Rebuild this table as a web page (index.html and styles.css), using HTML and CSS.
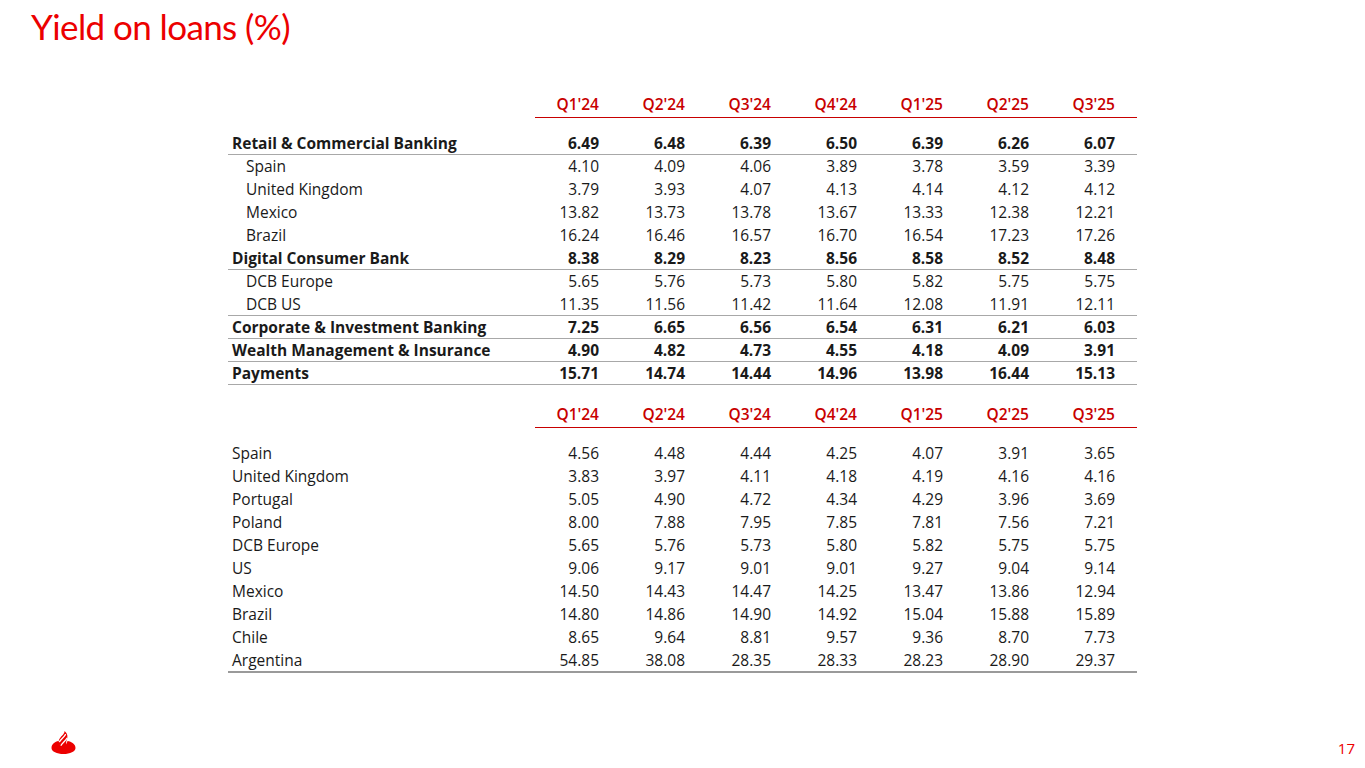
FILE: index.html
```html
<!DOCTYPE html>
<html lang="en">
<head>
<meta charset="utf-8">
<title>Yield on loans (%)</title>
<link rel="stylesheet" href="styles.css">
</head>
<body>
<div class="slide">
  <h1 class="title">Yield on loans (%)</h1>

  <div class="tables">
    <table class="data">
      <colgroup><col class="c-label"><col class="c-num"><col class="c-num"><col class="c-num"><col class="c-num"><col class="c-num"><col class="c-num"><col class="c-num"></colgroup>
      <thead>
        <tr class="head"><th class="blank"></th><th>Q1'24</th><th>Q2'24</th><th>Q3'24</th><th>Q4'24</th><th>Q1'25</th><th>Q2'25</th><th>Q3'25</th></tr>
      </thead>
      <tbody>
        <tr class="spacer"><td colspan="8"></td></tr>
        <tr class="bold line"><td>Retail &amp; Commercial Banking</td><td>6.49</td><td>6.48</td><td>6.39</td><td>6.50</td><td>6.39</td><td>6.26</td><td>6.07</td></tr>
        <tr class="sub"><td>Spain</td><td>4.10</td><td>4.09</td><td>4.06</td><td>3.89</td><td>3.78</td><td>3.59</td><td>3.39</td></tr>
        <tr class="sub"><td>United Kingdom</td><td>3.79</td><td>3.93</td><td>4.07</td><td>4.13</td><td>4.14</td><td>4.12</td><td>4.12</td></tr>
        <tr class="sub"><td>Mexico</td><td>13.82</td><td>13.73</td><td>13.78</td><td>13.67</td><td>13.33</td><td>12.38</td><td>12.21</td></tr>
        <tr class="sub"><td>Brazil</td><td>16.24</td><td>16.46</td><td>16.57</td><td>16.70</td><td>16.54</td><td>17.23</td><td>17.26</td></tr>
        <tr class="bold line"><td>Digital Consumer Bank</td><td>8.38</td><td>8.29</td><td>8.23</td><td>8.56</td><td>8.58</td><td>8.52</td><td>8.48</td></tr>
        <tr class="sub"><td>DCB Europe</td><td>5.65</td><td>5.76</td><td>5.73</td><td>5.80</td><td>5.82</td><td>5.75</td><td>5.75</td></tr>
        <tr class="sub line"><td>DCB US</td><td>11.35</td><td>11.56</td><td>11.42</td><td>11.64</td><td>12.08</td><td>11.91</td><td>12.11</td></tr>
        <tr class="bold line"><td>Corporate &amp; Investment Banking</td><td>7.25</td><td>6.65</td><td>6.56</td><td>6.54</td><td>6.31</td><td>6.21</td><td>6.03</td></tr>
        <tr class="bold line"><td>Wealth Management &amp; Insurance</td><td>4.90</td><td>4.82</td><td>4.73</td><td>4.55</td><td>4.18</td><td>4.09</td><td>3.91</td></tr>
        <tr class="bold line"><td>Payments</td><td>15.71</td><td>14.74</td><td>14.44</td><td>14.96</td><td>13.98</td><td>16.44</td><td>15.13</td></tr>
      </tbody>
    </table>

    <table class="data second">
      <colgroup><col class="c-label"><col class="c-num"><col class="c-num"><col class="c-num"><col class="c-num"><col class="c-num"><col class="c-num"><col class="c-num"></colgroup>
      <thead>
        <tr class="head"><th class="blank"></th><th>Q1'24</th><th>Q2'24</th><th>Q3'24</th><th>Q4'24</th><th>Q1'25</th><th>Q2'25</th><th>Q3'25</th></tr>
      </thead>
      <tbody>
        <tr class="spacer"><td colspan="8"></td></tr>
        <tr><td>Spain</td><td>4.56</td><td>4.48</td><td>4.44</td><td>4.25</td><td>4.07</td><td>3.91</td><td>3.65</td></tr>
        <tr><td>United Kingdom</td><td>3.83</td><td>3.97</td><td>4.11</td><td>4.18</td><td>4.19</td><td>4.16</td><td>4.16</td></tr>
        <tr><td>Portugal</td><td>5.05</td><td>4.90</td><td>4.72</td><td>4.34</td><td>4.29</td><td>3.96</td><td>3.69</td></tr>
        <tr><td>Poland</td><td>8.00</td><td>7.88</td><td>7.95</td><td>7.85</td><td>7.81</td><td>7.56</td><td>7.21</td></tr>
        <tr><td>DCB Europe</td><td>5.65</td><td>5.76</td><td>5.73</td><td>5.80</td><td>5.82</td><td>5.75</td><td>5.75</td></tr>
        <tr><td>US</td><td>9.06</td><td>9.17</td><td>9.01</td><td>9.01</td><td>9.27</td><td>9.04</td><td>9.14</td></tr>
        <tr><td>Mexico</td><td>14.50</td><td>14.43</td><td>14.47</td><td>14.25</td><td>13.47</td><td>13.86</td><td>12.94</td></tr>
        <tr><td>Brazil</td><td>14.80</td><td>14.86</td><td>14.90</td><td>14.92</td><td>15.04</td><td>15.88</td><td>15.89</td></tr>
        <tr><td>Chile</td><td>8.65</td><td>9.64</td><td>8.81</td><td>9.57</td><td>9.36</td><td>8.70</td><td>7.73</td></tr>
        <tr class="last"><td>Argentina</td><td>54.85</td><td>38.08</td><td>28.35</td><td>28.33</td><td>28.23</td><td>28.90</td><td>29.37</td></tr>
      </tbody>
    </table>
  </div>

  <div class="footer">
    <svg class="logo" width="25" height="24" viewBox="0 0 25 24" aria-label="Santander">
      <path d="M0.5 17 C0.5 13 4 10.5 7.5 10 L8.5 13 C9.5 15.8 14.5 15.8 15.5 13 L16.5 10 C20.5 10.5 24.5 13 24.5 17 C24.5 20.6 19 23 12.5 23 C6 23 0.5 20.6 0.5 17 Z" fill="#EC0000"/>
      <path d="M8.3 14 C6.6 10.5 8.3 7.5 11.2 4.6 C12.6 3.2 13.6 1.6 13.6 0 C16.6 2.6 17.2 6 15.7 9 C14.7 11 15.2 12.6 16.2 14 C14.2 16.2 10.3 16.2 8.3 14 Z" fill="#EC0000"/>
      <path d="M8.6 10.6 C9.9 8.2 12.8 6.6 14.4 3.6" stroke="#fff" stroke-width="1.3" fill="none" stroke-linecap="round"/>
      <path d="M10.1 14.2 C11.4 11.6 14.4 10.2 15.9 7.2" stroke="#fff" stroke-width="1.3" fill="none" stroke-linecap="round"/>
    </svg>
    <span class="page">17</span>
  </div>
</div>
</body>
</html>
```

FILE: styles.css
```css
html, body {
  margin: 0;
  padding: 0;
  background: #ffffff;
}

.slide {
  width: 1365px;
  height: 768px;
  display: flex;
  flex-direction: column;
  font-family: "Open Sans", "Noto Sans", sans-serif;
  color: #1a1a1a;
  overflow: hidden;
}

.title {
  margin: 0;
  padding: 3px 0 0 31px;
  height: 46px;
  font-family: "Lato", "Open Sans", sans-serif;
  font-weight: 400;
  font-size: 35px;
  line-height: 46px;
  color: #EC0000;
  letter-spacing: -0.6px;
}

.tables {
  margin: 46px 0 0 228px;
  width: 909px;
  display: flex;
  flex-direction: column;
  gap: 20px;
}

.data {
  width: 909px;
  border-collapse: collapse;
  table-layout: fixed;
  font-size: 15.5px;
}

.c-label { width: 307px; }
.c-num { width: 86px; }

.data th,
.data td {
  padding: 0 22px 0 0;
  text-align: right;
  white-space: nowrap;
  height: 23px;
  line-height: 23px;
}

.data td:first-child {
  text-align: left;
  padding-left: 4px;
}

.head th {
  height: 22px;
  line-height: 18px;
  vertical-align: top;
  color: #C80000;
  font-weight: 600;
  font-size: 15.5px;
  border-bottom: 1.5px solid #C80000;
}

.head th.blank {
  border-bottom: none;
}

.spacer td {
  height: 14px;
  line-height: 14px;
  padding: 0;
}

.bold td {
  font-weight: 700;
}

.sub td:first-child {
  padding-left: 18px;
}

.line td {
  height: 22px;
  line-height: 22px;
  border-bottom: 1px solid #a8a8a8;
}

.last td {
  height: 22px;
  line-height: 22px;
  border-bottom: 2px solid #9a9a9a;
}

.footer {
  margin-top: auto;
  height: 42px;
  display: flex;
  align-items: flex-start;
  justify-content: space-between;
  padding: 0 10px 0 51px;
}

.logo {
  margin-top: 5px;
  display: block;
}

.page {
  margin-top: 12px;
  font-size: 15px;
  color: #EC0000;
}
```
